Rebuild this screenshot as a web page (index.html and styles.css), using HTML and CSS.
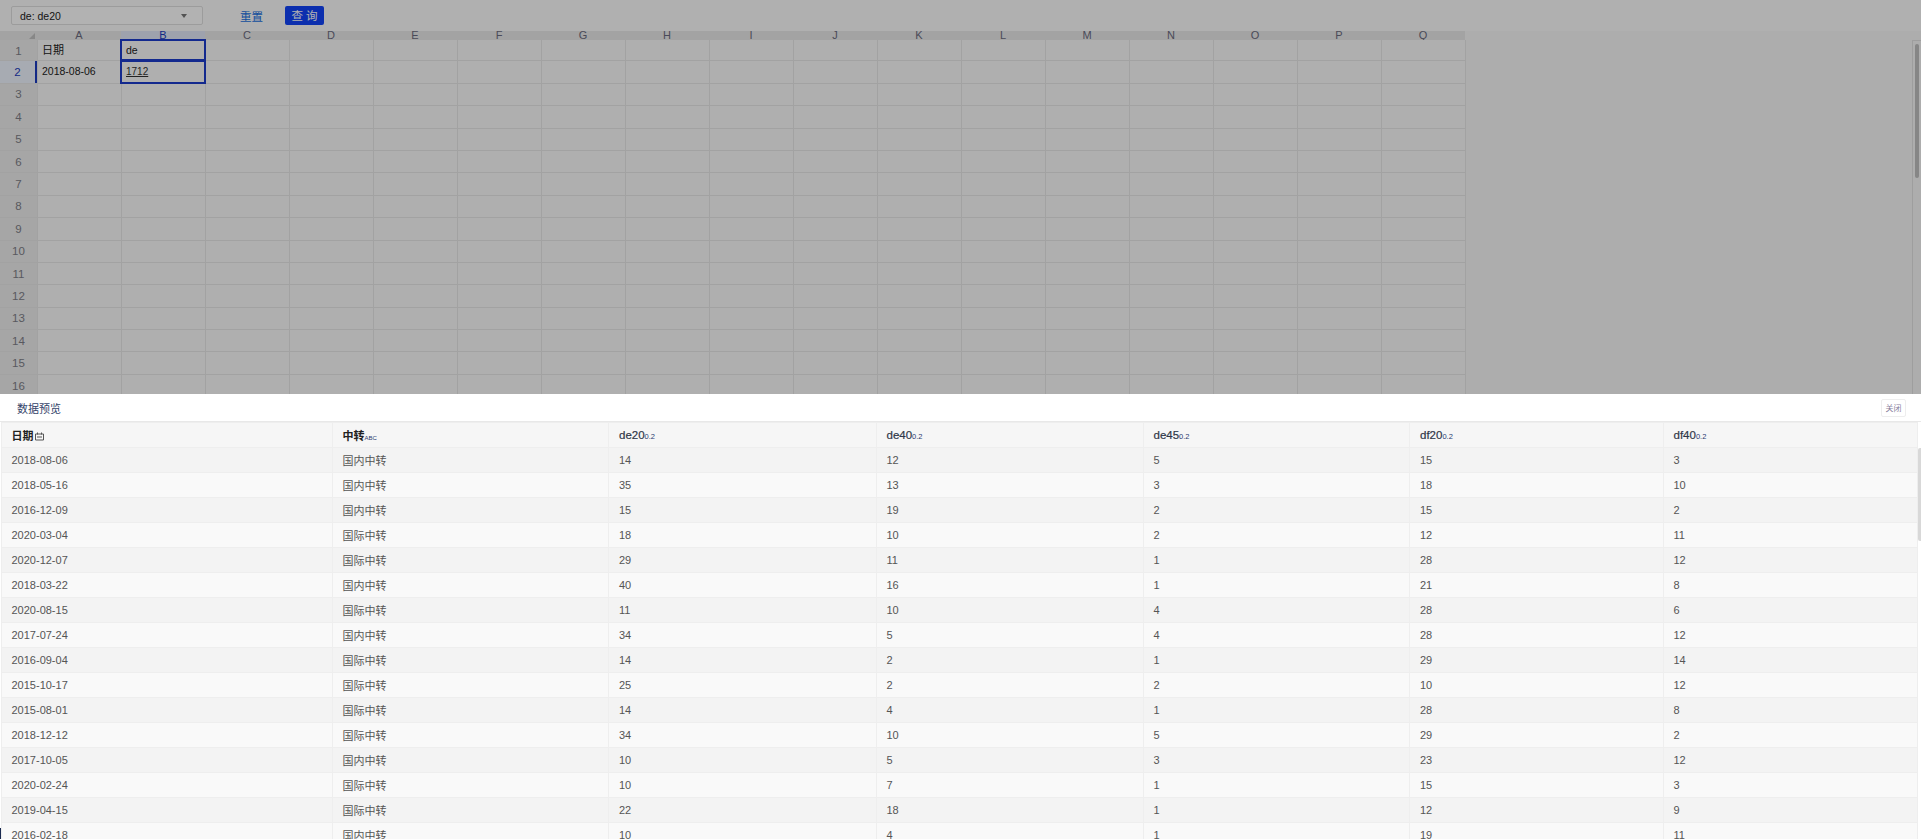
FILE: index.html
```html
<!DOCTYPE html>
<html lang="zh">
<head>
<meta charset="utf-8">
<title>数据预览</title>
<link rel="stylesheet" href="styles.css">
</head>
<body>
<div class="top">
  <div class="toolbar">
    <div class="select"><span>de: de20</span><i class="caret"></i></div>
    <a class="reset">重置</a>
    <button class="query">查 询</button>
  </div>
  <div class="work">
    <div class="sheet">
      <div class="heads">
        <div class="corner"><i></i></div>
        <div class="ch">A</div><div class="ch sel">B</div><div class="ch">C</div><div class="ch">D</div><div class="ch">E</div><div class="ch">F</div><div class="ch">G</div><div class="ch">H</div><div class="ch">I</div><div class="ch">J</div><div class="ch">K</div><div class="ch">L</div><div class="ch">M</div><div class="ch">N</div><div class="ch">O</div><div class="ch">P</div><div class="ch">Q</div>
      </div>
      <div class="row first"><div class="rh">1</div><div class="cells"><div class="cell zh">日期</div><div class="cell box">de</div></div></div>
      <div class="row"><div class="rh active">2</div><div class="cells"><div class="cell">2018-08-06</div><div class="cell box link">1712</div></div></div>
      <div class="row"><div class="rh">3</div><div class="cells"></div></div>
      <div class="row"><div class="rh">4</div><div class="cells"></div></div>
      <div class="row"><div class="rh">5</div><div class="cells"></div></div>
      <div class="row"><div class="rh">6</div><div class="cells"></div></div>
      <div class="row"><div class="rh">7</div><div class="cells"></div></div>
      <div class="row"><div class="rh">8</div><div class="cells"></div></div>
      <div class="row"><div class="rh">9</div><div class="cells"></div></div>
      <div class="row"><div class="rh">10</div><div class="cells"></div></div>
      <div class="row"><div class="rh">11</div><div class="cells"></div></div>
      <div class="row"><div class="rh">12</div><div class="cells"></div></div>
      <div class="row"><div class="rh">13</div><div class="cells"></div></div>
      <div class="row"><div class="rh">14</div><div class="cells"></div></div>
      <div class="row"><div class="rh">15</div><div class="cells"></div></div>
      <div class="row"><div class="rh">16</div><div class="cells"></div></div>
    </div>
    <div class="vscroll"><div class="vthumb"></div></div>
  </div>
  <div class="mask"></div>
</div>
<div class="panel">
  <div class="panel-head">
    <span class="panel-title">数据预览</span>
    <button class="close">关闭</button>
  </div>
  <div class="panel-body">
    <table class="data">
      <colgroup><col class="c1"><col class="c2"><col class="c3"><col class="c4"><col class="c5"><col class="c6"><col class="c7"></colgroup>
      <thead>
        <tr>
          <th><b>日期</b><svg class="cal" width="9" height="9" viewBox="0 0 9 9"><path d="M.5 2h8v6h-8zM2.5.5v2M6.5.5v2M2 5h5" fill="none" stroke="#555" stroke-width="1"/></svg></th>
          <th><b>中转</b><small class="abc">ABC</small></th>
          <th>de20<small>0.2</small></th>
          <th>de40<small>0.2</small></th>
          <th>de45<small>0.2</small></th>
          <th>df20<small>0.2</small></th>
          <th>df40<small>0.2</small></th>
        </tr>
      </thead>
      <tbody>
        <tr><td>2018-08-06</td><td>国内中转</td><td>14</td><td>12</td><td>5</td><td>15</td><td>3</td></tr>
        <tr><td>2018-05-16</td><td>国内中转</td><td>35</td><td>13</td><td>3</td><td>18</td><td>10</td></tr>
        <tr><td>2016-12-09</td><td>国内中转</td><td>15</td><td>19</td><td>2</td><td>15</td><td>2</td></tr>
        <tr><td>2020-03-04</td><td>国际中转</td><td>18</td><td>10</td><td>2</td><td>12</td><td>11</td></tr>
        <tr><td>2020-12-07</td><td>国际中转</td><td>29</td><td>11</td><td>1</td><td>28</td><td>12</td></tr>
        <tr><td>2018-03-22</td><td>国内中转</td><td>40</td><td>16</td><td>1</td><td>21</td><td>8</td></tr>
        <tr><td>2020-08-15</td><td>国际中转</td><td>11</td><td>10</td><td>4</td><td>28</td><td>6</td></tr>
        <tr><td>2017-07-24</td><td>国内中转</td><td>34</td><td>5</td><td>4</td><td>28</td><td>12</td></tr>
        <tr><td>2016-09-04</td><td>国际中转</td><td>14</td><td>2</td><td>1</td><td>29</td><td>14</td></tr>
        <tr><td>2015-10-17</td><td>国际中转</td><td>25</td><td>2</td><td>2</td><td>10</td><td>12</td></tr>
        <tr><td>2015-08-01</td><td>国际中转</td><td>14</td><td>4</td><td>1</td><td>28</td><td>8</td></tr>
        <tr><td>2018-12-12</td><td>国际中转</td><td>34</td><td>10</td><td>5</td><td>29</td><td>2</td></tr>
        <tr><td>2017-10-05</td><td>国内中转</td><td>10</td><td>5</td><td>3</td><td>23</td><td>12</td></tr>
        <tr><td>2020-02-24</td><td>国际中转</td><td>10</td><td>7</td><td>1</td><td>15</td><td>3</td></tr>
        <tr><td>2019-04-15</td><td>国际中转</td><td>22</td><td>18</td><td>1</td><td>12</td><td>9</td></tr>
        <tr><td>2016-02-18</td><td>国内中转</td><td>10</td><td>4</td><td>1</td><td>19</td><td>11</td></tr>
      </tbody>
    </table>
    <div class="pscroll"><div class="pthumb"></div></div>
  </div>
  <i class="edge-mark"></i>
</div>
</body>
</html>
```

FILE: styles.css
```css
* { box-sizing: border-box; }
html, body { margin: 0; height: 100%; overflow: hidden; }
body {
  display: flex;
  flex-direction: column;
  height: 839px;
  background: #fff;
  font-family: "Liberation Sans", "Noto Sans CJK SC", sans-serif;
  font-size: 11px;
  color: #333;
}

/* dimmed upper area */
.top {
  position: relative;
  height: 394px;
  flex: none;
  overflow: hidden;
  background: #f8f8f8;
}
.mask {
  position: absolute;
  inset: 0;
  background: rgba(0, 0, 0, .3);
}

.toolbar {
  display: flex;
  align-items: center;
  height: 31px;
  padding: 0 0 0 11px;
  background: #fdfdfd;
}
.select {
  display: flex;
  align-items: center;
  justify-content: space-between;
  width: 192px;
  height: 19px;
  padding: 0 15px 0 8px;
  border: 1px solid #e0e0e0;
  border-radius: 2px;
  background: #fff;
  color: #222;
  font-size: 10.5px;
}
.caret {
  width: 0;
  height: 0;
  border-left: 3.5px solid transparent;
  border-right: 3.5px solid transparent;
  border-top: 4px solid #777;
}
.reset {
  margin-left: 37px;
  color: #2070e0;
  font-size: 11.5px;
}
.query {
  width: 39px;
  height: 19px;
  margin-left: 22px;
  padding: 1px 0 0;
  border: 0;
  border-radius: 2px;
  background: #1244fa;
  color: #fff;
  font-family: inherit;
  font-size: 11.5px;
  line-height: 18px;
  white-space: pre;
}

.work { display: flex; }
.sheet { width: 1466px; flex: none; }
.heads { display: flex; height: 9px; }
.corner {
  position: relative;
  width: 37px;
  background: #eaeaea;
}
.corner i {
  position: absolute;
  right: 2px;
  top: 2px;
  width: 0;
  height: 0;
  border-left: 6px solid transparent;
  border-bottom: 6px solid #c2c2c2;
}
.ch {
  width: 84px;
  height: 9px;
  background: #eaeaea;
  color: #6a6a80;
  font-size: 11px;
  line-height: 9px;
  text-align: center;
}
.ch.sel { background: #e2e8f8; color: #1c3cc0; }

.row {
  display: flex;
  height: 22.4px;
  border-bottom: 1px solid #e8e8e8;
}
.row.first { height: 21.4px; }
.row.first .rh { padding-top: 1px; }
.rh {
  display: flex;
  align-items: center;
  justify-content: center;
  width: 37px;
  flex: none;
  background: #eeeeee;
  color: #808088;
  font-size: 11.5px;
}
.rh.active {
  background: #f0f5ff;
  border-right: 2px solid #1c3cc0;
  color: #1c3cc0;
}
.cells {
  display: flex;
  flex: 1;
  background: linear-gradient(to left, #e8e8e8 1px, #fbfbfb 1px) 1px 0 / 84px 100%;
}
.cell {
  width: 84px;
  padding-left: 5px;
  color: #222;
  font-size: 10.5px;
  line-height: 21px;
}
.cell.zh { font-size: 11px; }
.cell.box {
  position: relative;
  outline: 2px solid #1c3ccc;
  outline-offset: -1px;
}
.cell.link { color: #333; font-size: 10px; text-decoration: underline; }

.vscroll {
  width: 9px;
  height: 354px;
  margin-left: auto;
  margin-top: 9px;
  padding: 3px 2px 0;
  border-left: 1px solid #e2e2e2;
  border-top: 1px solid #e2e2e2;
}
.vthumb {
  width: 4px;
  height: 134px;
  border-radius: 2px;
  background: #c0c0c0;
}

/* preview panel */
.panel {
  position: relative;
  flex: 1;
  display: flex;
  flex-direction: column;
  min-height: 0;
  overflow: hidden;
  background: #fff;
}
.panel-head {
  display: flex;
  align-items: center;
  justify-content: space-between;
  height: 28px;
  flex: none;
  padding: 0 15px 0 17px;
  border-bottom: 1px solid #e8e8e8;
}
.panel-title { color: #34446a; font-size: 11px; }
.close {
  width: 25px;
  height: 18px;
  padding: 0;
  border: 1px solid #eee;
  border-radius: 2px;
  background: #fff;
  color: #8a7f9e;
  font-family: inherit;
  font-size: 8px;
}
.panel-body { display: flex; padding-left: 1px; }
.data {
  width: 1916px;
  flex: none;
  table-layout: fixed;
  border-collapse: collapse;
}
.c1 { width: 330.5px; }
.c2 { width: 276.5px; }
.c3 { width: 267.5px; }
.c4 { width: 267px; }
.c5 { width: 266.5px; }
.c6 { width: 253.5px; }
.c7 { width: 254.5px; }
.data th, .data td {
  height: 25px;
  padding: 0 0 0 10px;
  border: 1px solid #eee;
  text-align: left;
  white-space: nowrap;
}
.data th:first-child, .data td:first-child { padding-left: 9.5px; }
.data th {
  height: 24.5px;
  background: #f6f6f6;
  color: #2f3648;
  font-weight: 400;
  font-size: 11.5px;
  -webkit-text-stroke: .2px #2f3648;
}
.data th b { font-size: 11px; font-weight: 700; color: #222; -webkit-text-stroke: 0; }
.data th small { font-size: 7.5px; color: #2a3a70; -webkit-text-stroke: 0; }
.data th small.abc { font-size: 6px; }
.cal { margin-left: 1px; vertical-align: -1px; }
.data td { color: #555; }
.data tbody tr:nth-child(odd) td { background: #f3f3f3; }
.data tbody tr:nth-child(even) td { background: #f9f9f9; }

.pscroll { width: 4px; flex: none; padding-top: 26px; }
.pthumb {
  width: 4px;
  height: 93px;
  border-radius: 2px 0 0 2px;
  background: #d8d8d8;
}
.edge-mark {
  position: absolute;
  left: 0;
  bottom: 0;
  width: 1px;
  height: 11px;
  background: #1a2a50;
}
```
